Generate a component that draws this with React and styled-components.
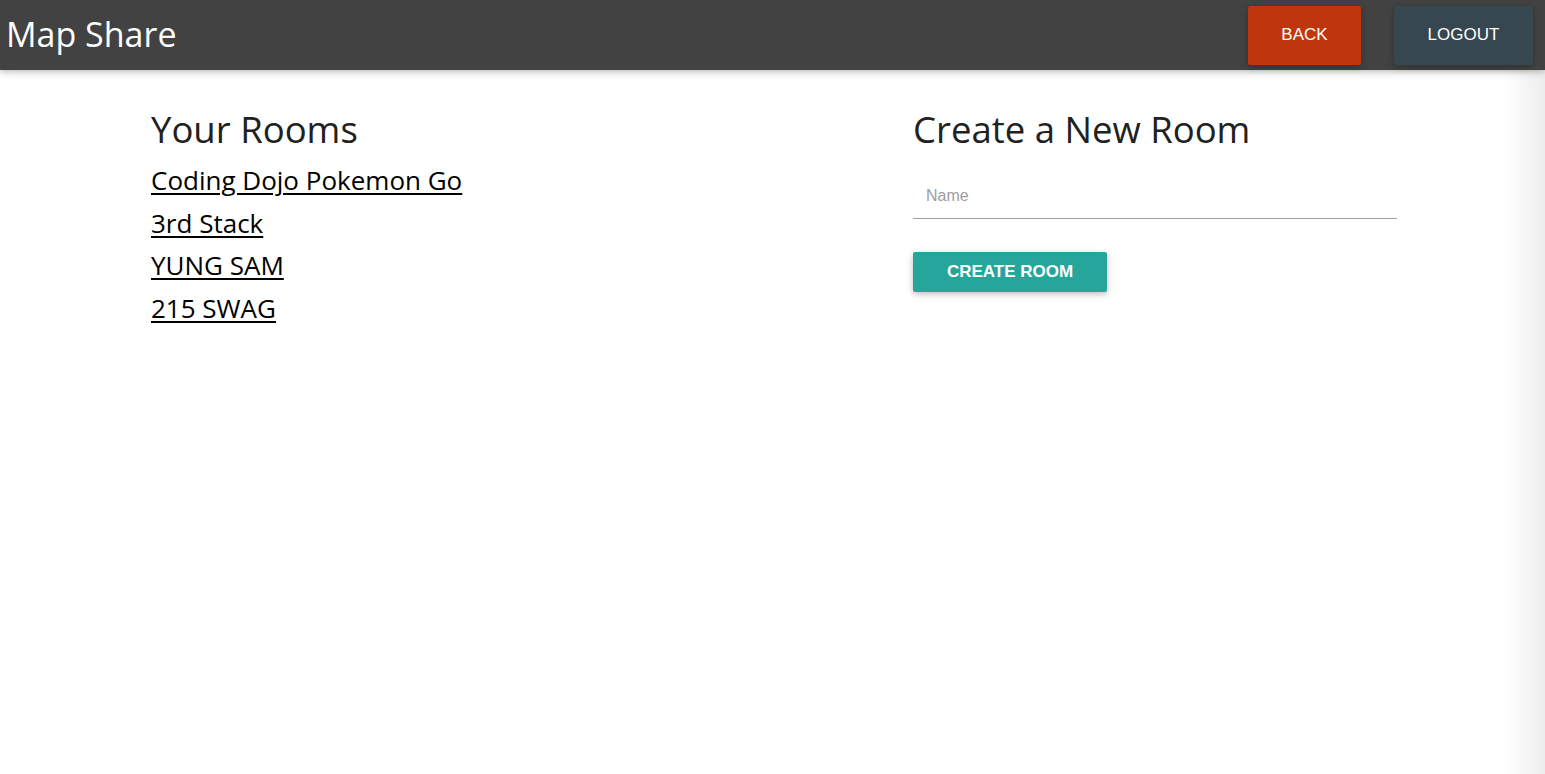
import styled, { createGlobalStyle } from 'styled-components';

const GlobalStyle = createGlobalStyle`
  html, body {
    margin: 0;
    padding: 0;
    background: #ffffff;
    font-family: 'Open Sans', 'Liberation Sans', sans-serif;
  }
  * {
    box-sizing: border-box;
  }
`;

const rooms = ['Coding Dojo Pokemon Go', '3rd Stack', 'YUNG SAM', '215 SWAG'];

const Page = styled.div`
  position: relative;
  min-height: 774px;
  overflow: hidden;
`;

const Nav = styled.nav`
  display: flex;
  align-items: center;
  height: 70px;
  padding: 0 12px 0 6px;
  background-color: #424242;
  box-shadow: 0 2px 5px 0 rgba(0, 0, 0, 0.16), 0 2px 10px 0 rgba(0, 0, 0, 0.12);
`;

const Brand = styled.a`
  flex: 1;
  color: #ffffff;
  font-size: 34px;
  text-decoration: none;
  margin-top: -2px;
`;

const NavButton = styled.button`
  height: 59px;
  width: ${(p) => p.w}px;
  margin-left: ${(p) => p.gap || 0}px;
  border: none;
  border-radius: 2px;
  background-color: ${(p) => p.color};
  color: #ffffff;
  font-family: 'Liberation Sans', Arial, sans-serif;
  font-size: 17px;
  text-transform: uppercase;
  box-shadow: 0 2px 5px 0 rgba(0, 0, 0, 0.16), 0 2px 10px 0 rgba(0, 0, 0, 0.12);
  cursor: pointer;
`;

const Content = styled.main`
  display: grid;
  grid-template-columns: 762px 484px;
  padding: 35px 0 0 151px;
`;

const Column = styled.section`
  display: flex;
  flex-direction: column;
`;

const Heading = styled.h4`
  margin: 0 0 6px;
  font-size: 36.5px;
  font-weight: 400;
  color: #212121;
  line-height: 48px;
`;

const RoomLink = styled.a`
  align-self: flex-start;
  color: #000000;
  font-size: 26px;
  line-height: 42.5px;
  text-decoration: underline;
  text-underline-offset: 3px;
  text-decoration-thickness: 2px;
`;

const NameInput = styled.input`
  width: 100%;
  height: 46px;
  margin-top: 14px;
  padding: 0 13px;
  border: none;
  border-bottom: 1px solid #9e9e9e;
  outline: none;
  font-family: 'Liberation Sans', Arial, sans-serif;
  font-size: 16px;
  color: #333333;
  background: transparent;

  &::placeholder {
    color: #9e9e9e;
  }
`;

const CreateButton = styled.button`
  align-self: flex-start;
  width: 194px;
  height: 40px;
  margin-top: 33px;
  border: none;
  border-radius: 2px;
  background-color: #26a69a;
  color: #ffffff;
  font-family: 'Liberation Sans', Arial, sans-serif;
  font-weight: 700;
  font-size: 17px;
  text-transform: uppercase;
  box-shadow: 0 2px 5px 0 rgba(0, 0, 0, 0.16), 0 2px 10px 0 rgba(0, 0, 0, 0.12);
  cursor: pointer;
`;

const EdgeShade = styled.div`
  position: absolute;
  top: 70px;
  right: 0;
  bottom: 0;
  width: 40px;
  background: linear-gradient(to right, rgba(0, 0, 0, 0), rgba(0, 0, 0, 0.07));
  pointer-events: none;
`;

function App() {
  return (
    <Page>
      <GlobalStyle />
      <Nav>
        <Brand href="#">Map Share</Brand>
        <NavButton w={113} color="#bf360c">Back</NavButton>
        <NavButton w={139} gap={33} color="#37474f">Logout</NavButton>
      </Nav>
      <Content>
        <Column>
          <Heading>Your Rooms</Heading>
          {rooms.map((room) => (
            <RoomLink key={room} href="#">
              {room}
            </RoomLink>
          ))}
        </Column>
        <Column>
          <Heading>Create a New Room</Heading>
          <NameInput placeholder="Name" />
          <CreateButton>Create Room</CreateButton>
        </Column>
      </Content>
      <EdgeShade />
    </Page>
  );
}

export default App;
